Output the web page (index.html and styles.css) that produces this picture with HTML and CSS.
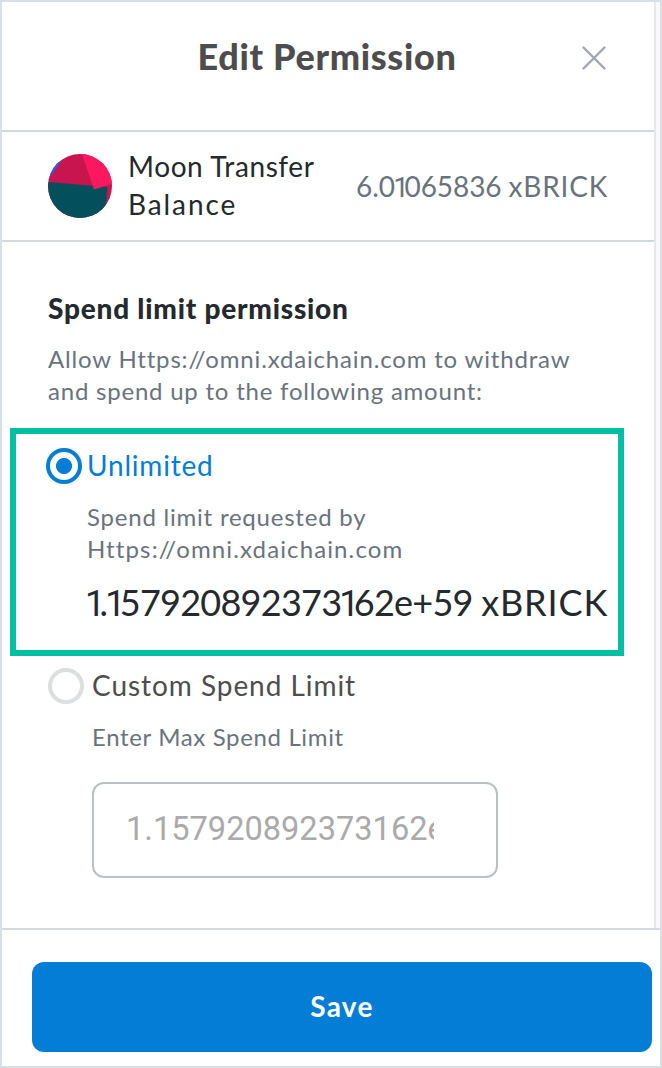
FILE: index.html
```html
<!DOCTYPE html>
<html lang="en">
<head>
<meta charset="utf-8">
<title>Edit Permission</title>
<link rel="stylesheet" href="styles.css">
</head>
<body>
<div class="popup">
  <main class="content">
    <header class="header">
      <h1 class="title">Edit Permission</h1>
      <button class="close" aria-label="Close">
        <svg width="24" height="24" viewBox="0 0 24 24"><path d="M1.500 1.500 22.500 22.500M22.500 1.500 1.500 22.500" stroke="#a1a6b8" stroke-width="2.400" stroke-linecap="round"/></svg>
      </button>
    </header>
    <section class="account">
      <svg class="avatar" width="64" height="64" viewBox="0 0 64 64">
        <defs><clipPath id="round"><circle cx="32" cy="32" r="32"/></clipPath></defs>
        <g clip-path="url(#round)">
          <path fill="#c8144f" d="M0 0h64v64H0z"/>
          <path fill="#2362e1" d="M0 0h18L0 26z"/>
          <path fill="#03505c" d="M0 28 59.500 33 57 64H0z"/>
          <path fill="#fb1861" d="M33.500-1H64v30.700L46 35.500z"/>
        </g>
      </svg>
      <div class="name"><span class="moon">Moon Transfer</span><br><span class="bal">Balance</span></div>
      <div class="amount"><span class="num">6.0<span class="one">1</span>065836</span> <span class="unit">xBRICK</span></div>
    </section>
    <section class="permission">
      <h2 class="subtitle">Spend limit permission</h2>
      <p class="note"><span class="n1">Allow Https://omni.xdaichain.com to withdraw</span><br>and spend up to the following amount:</p>
      <div class="option unlimited">
        <i class="radio on"></i>
        <div class="detail">
          <div class="label blue">Unlimited</div>
          <p class="note requested">Spend limit requested by<br><span class="site">Https://omni.xdaichain.com</span></p>
          <div class="limit"><span class="one">1</span>.<span class="one">1</span>57920892373<span class="one">1</span>62e+59 <span class="unit">xBRICK</span></div>
        </div>
      </div>
      <div class="option custom">
        <i class="radio"></i>
        <div class="detail">
          <div class="label">Custom Spend Limit</div>
          <div class="note enter">Enter Max Spend Limit</div>
          <div class="field"><div class="value">1.157920892373162e+59</div></div>
        </div>
      </div>
    </section>
  </main>
  <footer class="footer"><button class="save">Save</button></footer>
</div>
</body>
</html>
```
FILE: styles.css
```css
* { box-sizing: border-box; margin: 0; padding: 0; }
body { font-family: Lato, "Open Sans", sans-serif; background: #fff; color: #24292e; }
button { border: 0; background: none; font: inherit; }
.popup { width: 662px; height: 1068px; border: 2px solid #d6e0e6; display: flex; flex-direction: column; overflow: hidden; }
.content { height: 926px; margin-right: 4px; border-right: 2px solid #e5e7e9; box-shadow: 4px 0 #fafafa; }
.header { height: 130px; border-bottom: 2px solid #d1d8de; position: relative; padding: 30px 2px 0 0; }
.title { font-size: 36px; line-height: 48px; font-weight: 900; color: #4d4d4d; text-align: center; white-space: nowrap; letter-spacing: 0.67px; }
.close { position: absolute; top: 44px; right: 48px; width: 24px; height: 24px; }
.close svg, .avatar { display: block; }
.account { height: 110px; border-bottom: 2px solid #d1d8de; display: flex; align-items: center; padding: 0 46px; font-size: 28px; line-height: 38px; white-space: nowrap; }
.name { margin-left: 16px; padding-bottom: 2px; }
.moon { letter-spacing: 0.6px; }
.bal { letter-spacing: 1.900px; }
.amount { margin-left: auto; color: #6a737d; }
.num { letter-spacing: -0.100px; }
.one { font-family: Roboto, sans-serif; line-height: 1; }
.amount .one { letter-spacing: -4.400px; margin-left: -1.600px; }
.unit { letter-spacing: 0.8px; }
.permission { padding: 47px 0 0 46px; white-space: nowrap; }
.subtitle { font-size: 28px; line-height: 38px; font-weight: 900; letter-spacing: 0.77px; }
.note { font-size: 24px; line-height: 32px; color: #6a737d; letter-spacing: 0.78px; }
.n1 { letter-spacing: 0.83px; }
.site { letter-spacing: 1.120px; }
.subtitle + .note { margin-top: 16px; }
.option { display: flex; position: relative; }
.unlimited { margin-top: 39px; }
.unlimited::after { content: ""; position: absolute; left: -38px; top: -18px; width: 602px; height: 216px; border: 6px solid #00bfa5; }
.radio { width: 36px; height: 36px; border: 4px solid #dcdee0; border-radius: 50%; flex: none; }
.radio.on { border-color: #037dd6; margin-left: -2px; margin-top: 2px; background: radial-gradient(circle, #037dd6 7.600px, transparent 8.400px); }
.unlimited .detail { margin-left: 5px; }
.custom .detail { margin-left: 8px; }
.label { font-size: 28px; line-height: 38px; color: #4d4d4d; letter-spacing: 0.95px; }
.blue { color: #037dd6; letter-spacing: 0.8px; }
.requested { margin-top: 17px; }
.limit { font-size: 36px; line-height: 48px; height: 48px; margin-top: 13px; letter-spacing: -0.75px; }
.limit .one { letter-spacing: -5.700px; margin-left: -2px; }
.limit .unit { letter-spacing: 0.9px; }
.custom { margin-top: 40px; }
.custom .radio { margin-top: 2px; }
.enter { margin-top: 17px; letter-spacing: 0.64px; }
.field { width: 406px; height: 96px; margin-top: 29px; border: 2px solid #bbc0c5; border-radius: 12px; padding: 25px 62px 27px 32px; }
.value { overflow: hidden; font: 32.600px/40px Roboto, sans-serif; letter-spacing: 0; color: #aaa; }
.footer { height: 138px; border-top: 2px solid #d1d8de; padding: 32px 8px 0 30px; }
.save { display: block; width: 620px; height: 90px; border-radius: 12px; background: #037dd6; color: #fff; font-size: 28px; font-weight: 700; letter-spacing: 1.300px; padding-bottom: 2px; }
```
